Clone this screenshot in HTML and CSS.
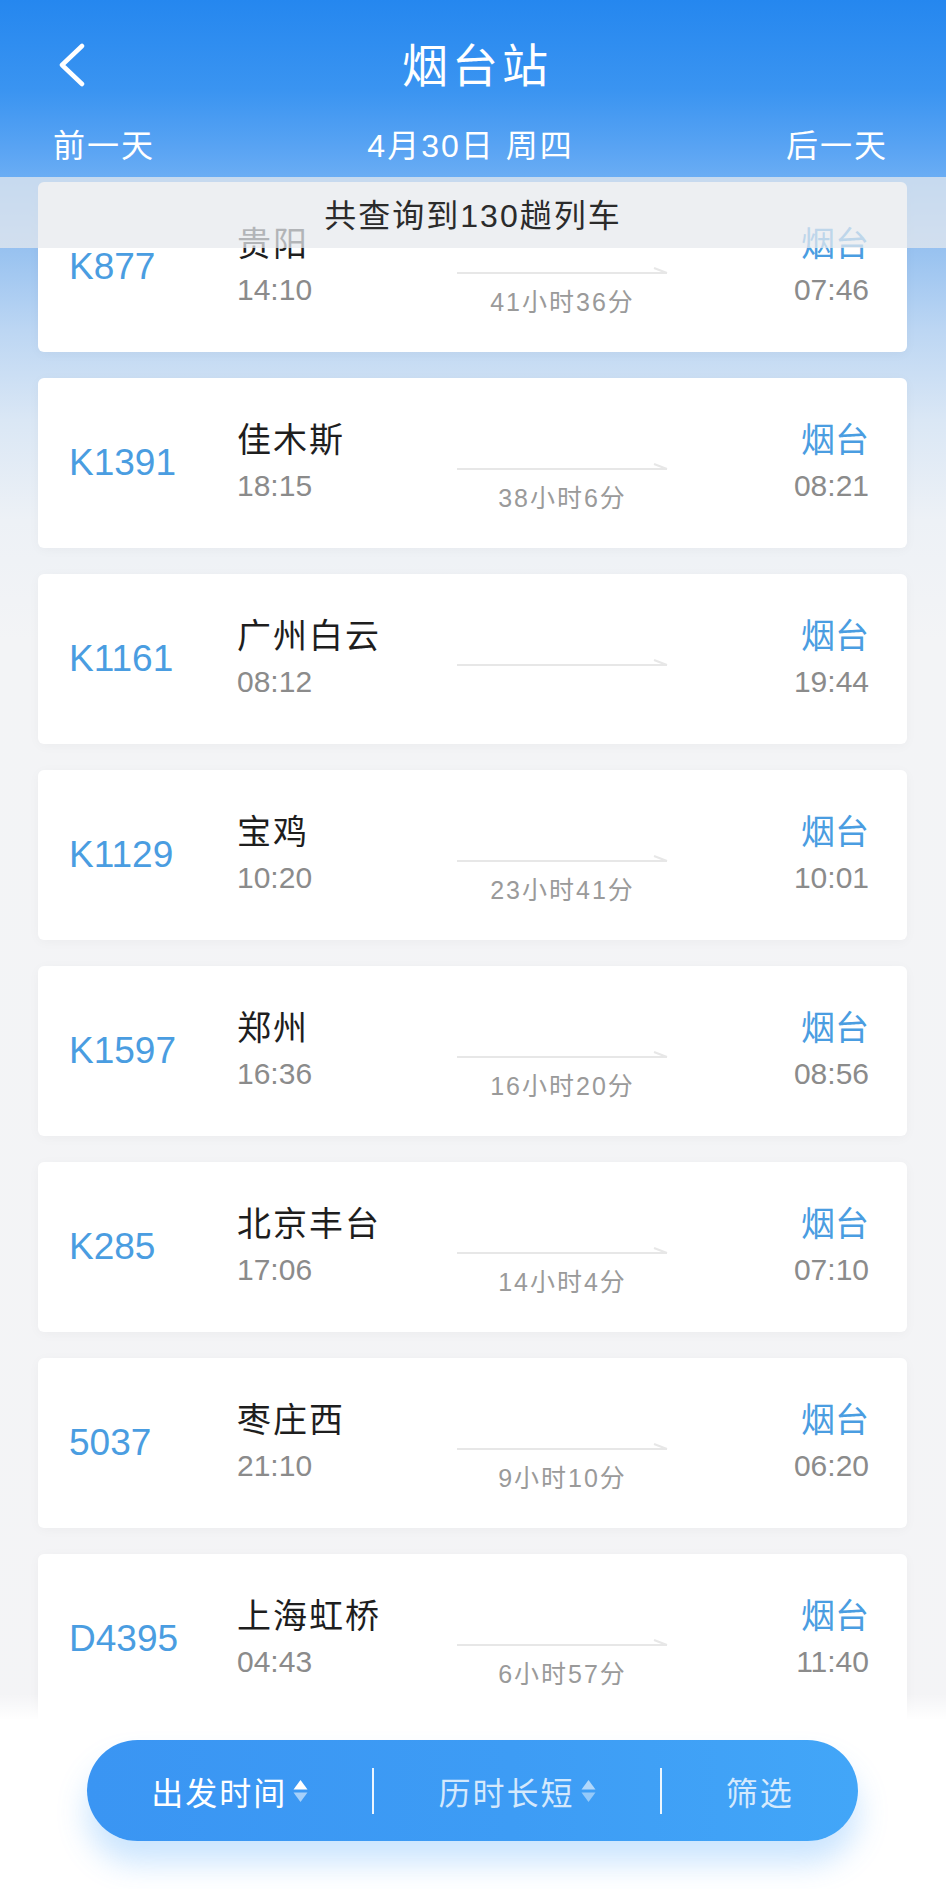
FILE: index.html
```html
<!DOCTYPE html>
<html lang="zh-CN">
<head>
<meta charset="utf-8">
<title>烟台站</title>
<link rel="stylesheet" href="styles.css">
</head>
<body>
<div class="page">
  <header class="topbar">
    <div class="nav">
      <div class="nav-left">
        <svg class="back" width="26" height="44" viewBox="0 0 26 44"><polyline points="23,3 3,22 23,41" fill="none" stroke="#fff" stroke-width="4.5" stroke-linecap="round" stroke-linejoin="round"/></svg>
      </div>
      <div class="title">烟台站</div>
      <div class="nav-right"></div>
    </div>
    <div class="dates">
      <span>前一天</span>
      <span>4月30日 周四</span>
      <span>后一天</span>
    </div>
  </header>

  <div class="summary">共查询到130趟列车</div>

  <main class="list">
    <div class="card">
      <div class="num">K877</div>
      <div class="dep"><div class="stn">贵阳</div><div class="time">14:10</div></div>
      <div class="mid"><svg class="arrow" width="211" height="10" viewBox="0 0 211 10"><line x1="0" y1="8" x2="210" y2="8" stroke="#e7e7e7" stroke-width="2"/><line x1="197" y1="3" x2="210" y2="8" stroke="#e7e7e7" stroke-width="2"/></svg><div class="dur">41小时36分</div></div>
      <div class="arr"><div class="stn blue">烟台</div><div class="time">07:46</div></div>
    </div>
    <div class="card">
      <div class="num">K1391</div>
      <div class="dep"><div class="stn">佳木斯</div><div class="time">18:15</div></div>
      <div class="mid"><svg class="arrow" width="211" height="10" viewBox="0 0 211 10"><line x1="0" y1="8" x2="210" y2="8" stroke="#e7e7e7" stroke-width="2"/><line x1="197" y1="3" x2="210" y2="8" stroke="#e7e7e7" stroke-width="2"/></svg><div class="dur">38小时6分</div></div>
      <div class="arr"><div class="stn blue">烟台</div><div class="time">08:21</div></div>
    </div>
    <div class="card">
      <div class="num">K1161</div>
      <div class="dep"><div class="stn">广州白云</div><div class="time">08:12</div></div>
      <div class="mid"><svg class="arrow" width="211" height="10" viewBox="0 0 211 10"><line x1="0" y1="8" x2="210" y2="8" stroke="#e7e7e7" stroke-width="2"/><line x1="197" y1="3" x2="210" y2="8" stroke="#e7e7e7" stroke-width="2"/></svg><div class="dur ghost">&nbsp;</div></div>
      <div class="arr"><div class="stn blue">烟台</div><div class="time">19:44</div></div>
    </div>
    <div class="card">
      <div class="num">K1129</div>
      <div class="dep"><div class="stn">宝鸡</div><div class="time">10:20</div></div>
      <div class="mid"><svg class="arrow" width="211" height="10" viewBox="0 0 211 10"><line x1="0" y1="8" x2="210" y2="8" stroke="#e7e7e7" stroke-width="2"/><line x1="197" y1="3" x2="210" y2="8" stroke="#e7e7e7" stroke-width="2"/></svg><div class="dur">23小时41分</div></div>
      <div class="arr"><div class="stn blue">烟台</div><div class="time">10:01</div></div>
    </div>
    <div class="card">
      <div class="num">K1597</div>
      <div class="dep"><div class="stn">郑州</div><div class="time">16:36</div></div>
      <div class="mid"><svg class="arrow" width="211" height="10" viewBox="0 0 211 10"><line x1="0" y1="8" x2="210" y2="8" stroke="#e7e7e7" stroke-width="2"/><line x1="197" y1="3" x2="210" y2="8" stroke="#e7e7e7" stroke-width="2"/></svg><div class="dur">16小时20分</div></div>
      <div class="arr"><div class="stn blue">烟台</div><div class="time">08:56</div></div>
    </div>
    <div class="card">
      <div class="num">K285</div>
      <div class="dep"><div class="stn">北京丰台</div><div class="time">17:06</div></div>
      <div class="mid"><svg class="arrow" width="211" height="10" viewBox="0 0 211 10"><line x1="0" y1="8" x2="210" y2="8" stroke="#e7e7e7" stroke-width="2"/><line x1="197" y1="3" x2="210" y2="8" stroke="#e7e7e7" stroke-width="2"/></svg><div class="dur">14小时4分</div></div>
      <div class="arr"><div class="stn blue">烟台</div><div class="time">07:10</div></div>
    </div>
    <div class="card">
      <div class="num">5037</div>
      <div class="dep"><div class="stn">枣庄西</div><div class="time">21:10</div></div>
      <div class="mid"><svg class="arrow" width="211" height="10" viewBox="0 0 211 10"><line x1="0" y1="8" x2="210" y2="8" stroke="#e7e7e7" stroke-width="2"/><line x1="197" y1="3" x2="210" y2="8" stroke="#e7e7e7" stroke-width="2"/></svg><div class="dur">9小时10分</div></div>
      <div class="arr"><div class="stn blue">烟台</div><div class="time">06:20</div></div>
    </div>
    <div class="card">
      <div class="num">D4395</div>
      <div class="dep"><div class="stn">上海虹桥</div><div class="time">04:43</div></div>
      <div class="mid"><svg class="arrow" width="211" height="10" viewBox="0 0 211 10"><line x1="0" y1="8" x2="210" y2="8" stroke="#e7e7e7" stroke-width="2"/><line x1="197" y1="3" x2="210" y2="8" stroke="#e7e7e7" stroke-width="2"/></svg><div class="dur">6小时57分</div></div>
      <div class="arr"><div class="stn blue">烟台</div><div class="time">11:40</div></div>
    </div>
  </main>

  <div class="bottom">
    <div class="pill">
      <div class="seg active">出发时间<svg class="sort" width="15" height="26" viewBox="0 0 15 26"><polygon points="0.5,11.5 7.5,2 14.5,11.5" class="up"/><polygon points="0.5,14.5 14.5,14.5 7.5,24" class="down"/></svg></div>
      <div class="divider"></div>
      <div class="seg">历时长短<svg class="sort" width="15" height="26" viewBox="0 0 15 26"><polygon points="0.5,11.5 7.5,2 14.5,11.5" class="up"/><polygon points="0.5,14.5 14.5,14.5 7.5,24" class="down"/></svg></div>
      <div class="divider"></div>
      <div class="seg">筛选</div>
    </div>
  </div>
</div>
</body>
</html>
```

FILE: styles.css
```css
* { box-sizing: border-box; }
html, body { margin: 0; padding: 0; }
body {
  width: 946px;
  height: 1889px;
  overflow: hidden;
  font-family: "Liberation Sans", "Noto Sans CJK SC", sans-serif;
  background: #f4f4f6;
}
.page {
  position: relative;
  width: 946px;
  height: 1889px;
  overflow: hidden;
  background: linear-gradient(to bottom,
    #2587ef 0px,
    #3a94f1 90px,
    #5aa4f3 150px,
    #6aadf4 177px,
    #98c2f0 250px,
    #bcd6f3 330px,
    #dae7f5 420px,
    #edf1f6 520px,
    #f3f4f6 640px,
    #f4f4f6 100%);
}

/* header */
.topbar {
  height: 177px;
  display: flex;
  flex-direction: column;
  color: #fff;
}
.nav {
  height: 114px;
  padding-top: 10px;
  display: grid;
  grid-template-columns: 1fr auto 1fr;
  align-items: center;
}
.nav-left { padding-left: 59px; display: flex; align-items: center; padding-top: 6px; }
.back { display: block; }
.title {
  font-family: "Noto Sans CJK SC", sans-serif;
  font-size: 46px;
  letter-spacing: 4px;
  line-height: 60px;
  padding-left: 8px;
}
.dates {
  height: 58px;
  display: flex;
  justify-content: space-between;
  align-items: center;
  padding: 0 58px 0 53px;
  font-size: 32px;
  letter-spacing: 2px;
}

/* translucent summary strip */
.summary {
  position: absolute;
  top: 177px;
  left: 0;
  right: 0;
  height: 71px;
  background: rgba(231, 233, 237, 0.74);
  color: #2b2b2b;
  font-size: 32px;
  letter-spacing: 2px;
  display: flex;
  align-items: center;
  justify-content: center;
  z-index: 2;
}

/* list */
.list {
  padding: 5px 39px 0 38px;
  display: flex;
  flex-direction: column;
  gap: 26px;
}
.card {
  height: 170px;
  background: #fff;
  border-radius: 6px;
  box-shadow: 0 2px 12px rgba(0, 0, 0, 0.035);
  display: flex;
  align-items: center;
  padding: 0 38px 0 31px;
}
.num {
  width: 168px;
  font-size: 37px;
  color: #4a9de1;
  line-height: 44px;
}
.dep { width: 220px; }
.stn {
  font-size: 34px;
  letter-spacing: 2px;
  color: #1e1e1e;
  line-height: 46px;
}
.stn.blue { color: #4a9de1; letter-spacing: 0; }
.time {
  font-size: 30px;
  color: #8b8b8b;
  line-height: 46px;
}
.mid {
  width: 211px;
  align-self: flex-start;
  padding-top: 83px;
  text-align: center;
}
.arrow { display: block; }
.dur {
  margin-top: 12px;
  font-size: 25px;
  letter-spacing: 2px;
  color: #9a9a9a;
  line-height: 30px;
}
.arr {
  flex: 1;
  text-align: right;
}

/* bottom */
.bottom {
  position: absolute;
  left: 0;
  right: 0;
  bottom: 0;
  height: 195px;
  background: linear-gradient(to bottom, rgba(255,255,255,0) 0px, #fff 26px, #fff 100%);
  padding: 46px 88px 0 87px;
  z-index: 3;
}
.pill {
  height: 101px;
  border-radius: 51px;
  background: linear-gradient(to right, #3a95f3 0%, #3d9cf5 55%, #42a6f8 100%);
  box-shadow: 0 22px 30px rgba(70, 160, 250, 0.28);
  display: flex;
  align-items: center;
  color: rgba(255, 255, 255, 0.78);
  font-family: "Noto Sans CJK SC", sans-serif;
  font-size: 32px;
  letter-spacing: 2px;
}
.seg {
  flex: 1 1 auto;
  display: flex;
  align-items: center;
  justify-content: center;
}
.seg.active { color: #fff; }
.sort { display: block; margin-left: 6px; }
.sort .up { fill: rgba(255, 255, 255, 0.6); }
.sort .down { fill: rgba(255, 255, 255, 0.45); }
.seg.active .sort .up { fill: #fff; }
.seg.active .sort .down { fill: rgba(255, 255, 255, 0.55); }
.divider {
  width: 2px;
  height: 46px;
  background: rgba(255, 255, 255, 0.9);
}
```
